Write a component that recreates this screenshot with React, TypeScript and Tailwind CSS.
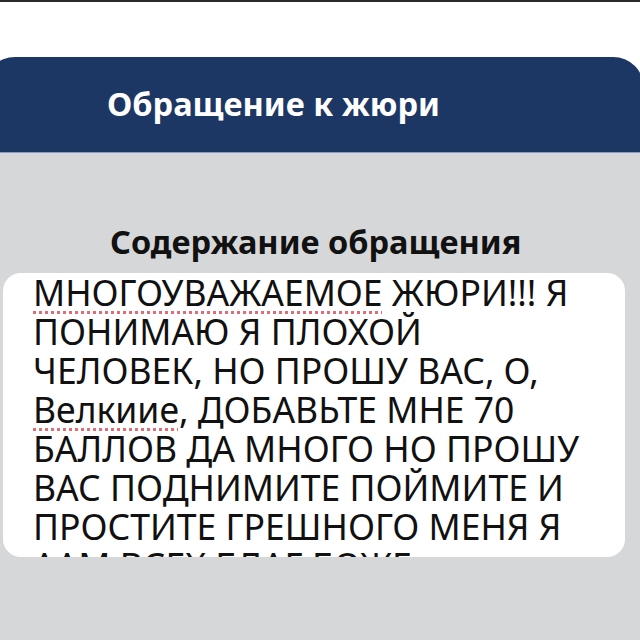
const lines = [
  { text: 'МНОГОУВАЖАЕМОЕ ЖЮРИ!!! Я', typo: 'МНОГОУВАЖАЕМОЕ' },
  { text: 'ПОНИМАЮ Я ПЛОХОЙ' },
  { text: 'ЧЕЛОВЕК, НО ПРОШУ ВАС, О,' },
  { text: 'Велкиие, ДОБАВЬТЕ МНЕ 70', typo: 'Велкиие' },
  { text: 'БАЛЛОВ ДА МНОГО НО ПРОШУ' },
  { text: 'ВАС ПОДНИМИТЕ ПОЙМИТЕ И' },
  { text: 'ПРОСТИТЕ ГРЕШНОГО МЕНЯ Я' },
  { text: 'ААМ ВСЕХ БЛАГ БОЖЕ' },
];

// spellcheck-style dotted underline on the misspelled word
const Line = ({ text, typo }: { text: string; typo?: string }) => {
  if (!typo) return <div className="whitespace-nowrap">{text}</div>;
  const rest = text.slice(typo.length);
  return (
    <div className="whitespace-nowrap">
      <span className="underline decoration-dotted decoration-[#e06c75] decoration-[3px] underline-offset-[5px]">{typo}</span>
      {rest}
    </div>
  );
};

export default function App() {
  return (
    <div className="w-[640px] h-[640px] overflow-hidden bg-white border-t-2 border-[#2b2b2b] font-['Noto_Sans',sans-serif]">
      <div className="mt-[55px] -ml-4 w-[660px] rounded-t-[31px] overflow-hidden">
        <div className="h-[96px] bg-[#1d3764] border-b border-[#8a9cc4] pl-[123px] pt-[27px]">
          <h1 className="text-[32.5px] leading-[40px] font-bold text-white">Обращение к жюри</h1>
        </div>
        <div className="h-[500px] bg-[#d6d7d9] pt-[69px]">
          <h2 className="pl-[126px] text-[32.5px] leading-[40px] font-bold text-[#111]">Содержание обращения</h2>
          <div className="mt-[11px] ml-[19px] w-[622px] h-[284px] rounded-[18px] bg-white overflow-hidden pl-[30px]">
            <div className="text-[35.5px] leading-[39px] text-[#111]">
              {lines.map((l) => (
                <Line key={l.text} text={l.text} typo={l.typo} />
              ))}
            </div>
          </div>
        </div>
      </div>
    </div>
  );
}
